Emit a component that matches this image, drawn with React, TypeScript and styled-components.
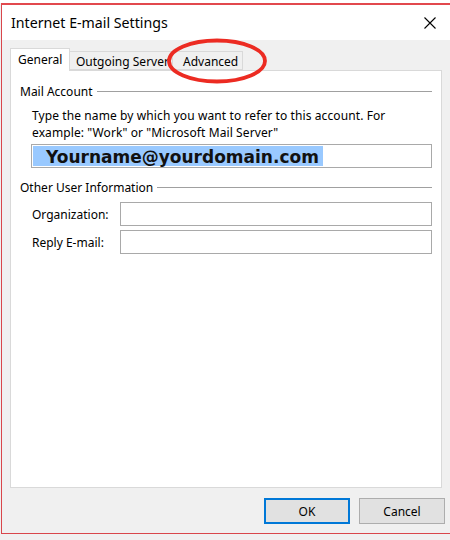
import React from "react";
import styled, { createGlobalStyle } from "styled-components";

const GlobalStyle = createGlobalStyle`
  html, body {
    margin: 0;
    padding: 0;
    background: #f0f0f0;
    width: 450px;
    height: 540px;
    overflow: hidden;
  }
  * { box-sizing: border-box; }
`;

const UI = `"Noto Sans", "Open Sans", sans-serif`;

const Page = styled.div`
  width: 450px;
  height: 540px;
  display: flex;
  flex-direction: column;
  background: #f0f0f0;
  font-family: ${UI};
`;

const BackStrip = styled.div`
  height: 3px;
  background: #ffffff;
`;

const Window = styled.div`
  margin-left: 1px;
  height: 531px;
  border-top: 2px solid #e2484d;
  border-left: 1px solid #d9464b;
  border-bottom: 1px solid #d9464b;
  display: flex;
  flex-direction: column;
  background: #f0f0f0;
`;

const TitleBar = styled.div`
  height: 35px;
  background: #ffffff;
  display: flex;
  align-items: center;
  justify-content: space-between;
  padding: 0 14px 0 9px;
`;

const Title = styled.div`
  font-size: 14.2px;
  color: #000;
  padding-bottom: 0;
`;

const Body = styled.div`
  flex: 1;
  display: flex;
  flex-direction: column;
  padding: 8px 5px 0 8px;
`;

const TabArea = styled.div`
  position: relative;
  display: flex;
  flex-direction: column;
`;

const TabRow = styled.div`
  display: flex;
  align-items: flex-end;
  height: 22px;
  position: relative;
  z-index: 1;
`;

const Tab = styled.div<{ $active?: boolean }>`
  height: ${(p) => (p.$active ? "23px" : "19px")};
  margin-bottom: ${(p) => (p.$active ? "-1px" : "0")};
  margin-left: ${(p) => (p.$active ? "0" : "-1px")};
  padding: 0 ${(p) => (p.$active ? "7px" : "6px")};
  border: 1px solid #d9d9d9;
  border-bottom: ${(p) => (p.$active ? "none" : "1px solid #d9d9d9")};
  background: ${(p) => (p.$active ? "#ffffff" : "#f0f0f0")};
  font-size: 12px;
  color: #000;
  display: flex;
  align-items: ${(p) => (p.$active ? "flex-start" : "center")};
  padding-top: ${(p) => (p.$active ? "2px" : "1px")};
  white-space: nowrap;
  overflow: hidden;
  width: ${(p) => (p.$active ? "60px" : "auto")};
`;

const Panel = styled.div`
  height: 418px;
  width: 432px;
  background: #ffffff;
  border: 1px solid #d9d9d9;
  padding: 11px 9px 0 9px;
  display: flex;
  flex-direction: column;
`;

const GroupHeader = styled.div`
  display: flex;
  align-items: center;
  gap: 4px;
  font-size: 12px;
  color: #000;
  height: 18px;
`;

const GroupLine = styled.div`
  flex: 1;
  height: 1px;
  background: #a0a0a0;
`;

const GroupBody = styled.div`
  padding-left: 12px;
  display: flex;
  flex-direction: column;
`;

const Description = styled.div`
  font-size: 12px;
  line-height: 17px;
  color: #000;
  margin-top: 7px;
  letter-spacing: 0.1px;
`;

const TextBox = styled.div`
  height: 24px;
  border: 1px solid #a9a9a9;
  background: #ffffff;
  display: flex;
  align-items: center;
  padding-left: 1px;
`;

const AccountBox = styled(TextBox)`
  margin-top: 3px;
  margin-left: -1px;
`;

const Selected = styled.span`
  background: #99c9ff;
  height: 20px;
  display: flex;
  align-items: center;
  padding: 1px 4px 0 13px;
  font-family: "DejaVu Sans", Verdana, sans-serif;
  font-weight: bold;
  font-size: 17px;
  color: #111;
`;

const FieldRow = styled.div`
  display: flex;
  align-items: center;
  height: 24px;
  margin-top: 4px;
`;

const FieldLabel = styled.div`
  width: 88px;
  font-size: 12px;
  color: #000;
`;

const FieldInput = styled(TextBox)`
  flex: 1;
`;

const Footer = styled.div`
  display: flex;
  justify-content: flex-end;
  gap: 9px;
  padding: 10px 0 0 0;
`;

const Button = styled.button<{ $primary?: boolean }>`
  width: 86px;
  height: 26px;
  background: #e1e1e1;
  border: ${(p) => (p.$primary ? "2px solid #0078d7" : "1px solid #adadad")};
  font-family: ${UI};
  font-size: 12px;
  color: #000;
  padding: 0;
`;

const Annotation = styled.svg`
  position: absolute;
  left: 156px;
  top: -10px;
  width: 102px;
  height: 46px;
  pointer-events: none;
  z-index: 3;
`;

export default function App() {
  return (
    <>
      <GlobalStyle />
      <Page>
        <BackStrip />
        <Window>
          <TitleBar>
            <Title>Internet E-mail Settings</Title>
            <svg width="12" height="12" viewBox="0 0 12 12">
              <path d="M0.5 0.5 L11.5 11.5 M11.5 0.5 L0.5 11.5" stroke="#000" strokeWidth="1.1" />
            </svg>
          </TitleBar>
          <Body>
            <TabArea>
              <TabRow>
                <Tab $active>General</Tab>
                <Tab style={{ width: 104 }}>Outgoing Server</Tab>
                <Tab style={{ width: 71, paddingLeft: 10 }}>Advanced</Tab>
              </TabRow>
              <Annotation viewBox="0 0 102 46">
                <ellipse cx="51" cy="23" rx="48" ry="20.5" fill="none" stroke="#ec2b22" strokeWidth="3.8" />
              </Annotation>
              <Panel>
                <GroupHeader>
                  <span>Mail Account</span>
                  <GroupLine />
                </GroupHeader>
                <GroupBody>
                  <Description>
                    Type the name by which you want to refer to this account. For
                    <br />
                    example: "Work" or "Microsoft Mail Server"
                  </Description>
                  <AccountBox>
                    <Selected>Yourname@yourdomain.com</Selected>
                  </AccountBox>
                </GroupBody>
                <GroupHeader style={{ marginTop: 10 }}>
                  <span>Other User Information</span>
                  <GroupLine />
                </GroupHeader>
                <GroupBody>
                  <FieldRow style={{ marginTop: 6 }}>
                    <FieldLabel>Organization:</FieldLabel>
                    <FieldInput />
                  </FieldRow>
                  <FieldRow>
                    <FieldLabel>Reply E-mail:</FieldLabel>
                    <FieldInput />
                  </FieldRow>
                </GroupBody>
              </Panel>
            </TabArea>
            <Footer>
              <Button $primary>OK</Button>
              <Button>Cancel</Button>
            </Footer>
          </Body>
        </Window>
      </Page>
    </>
  );
}
